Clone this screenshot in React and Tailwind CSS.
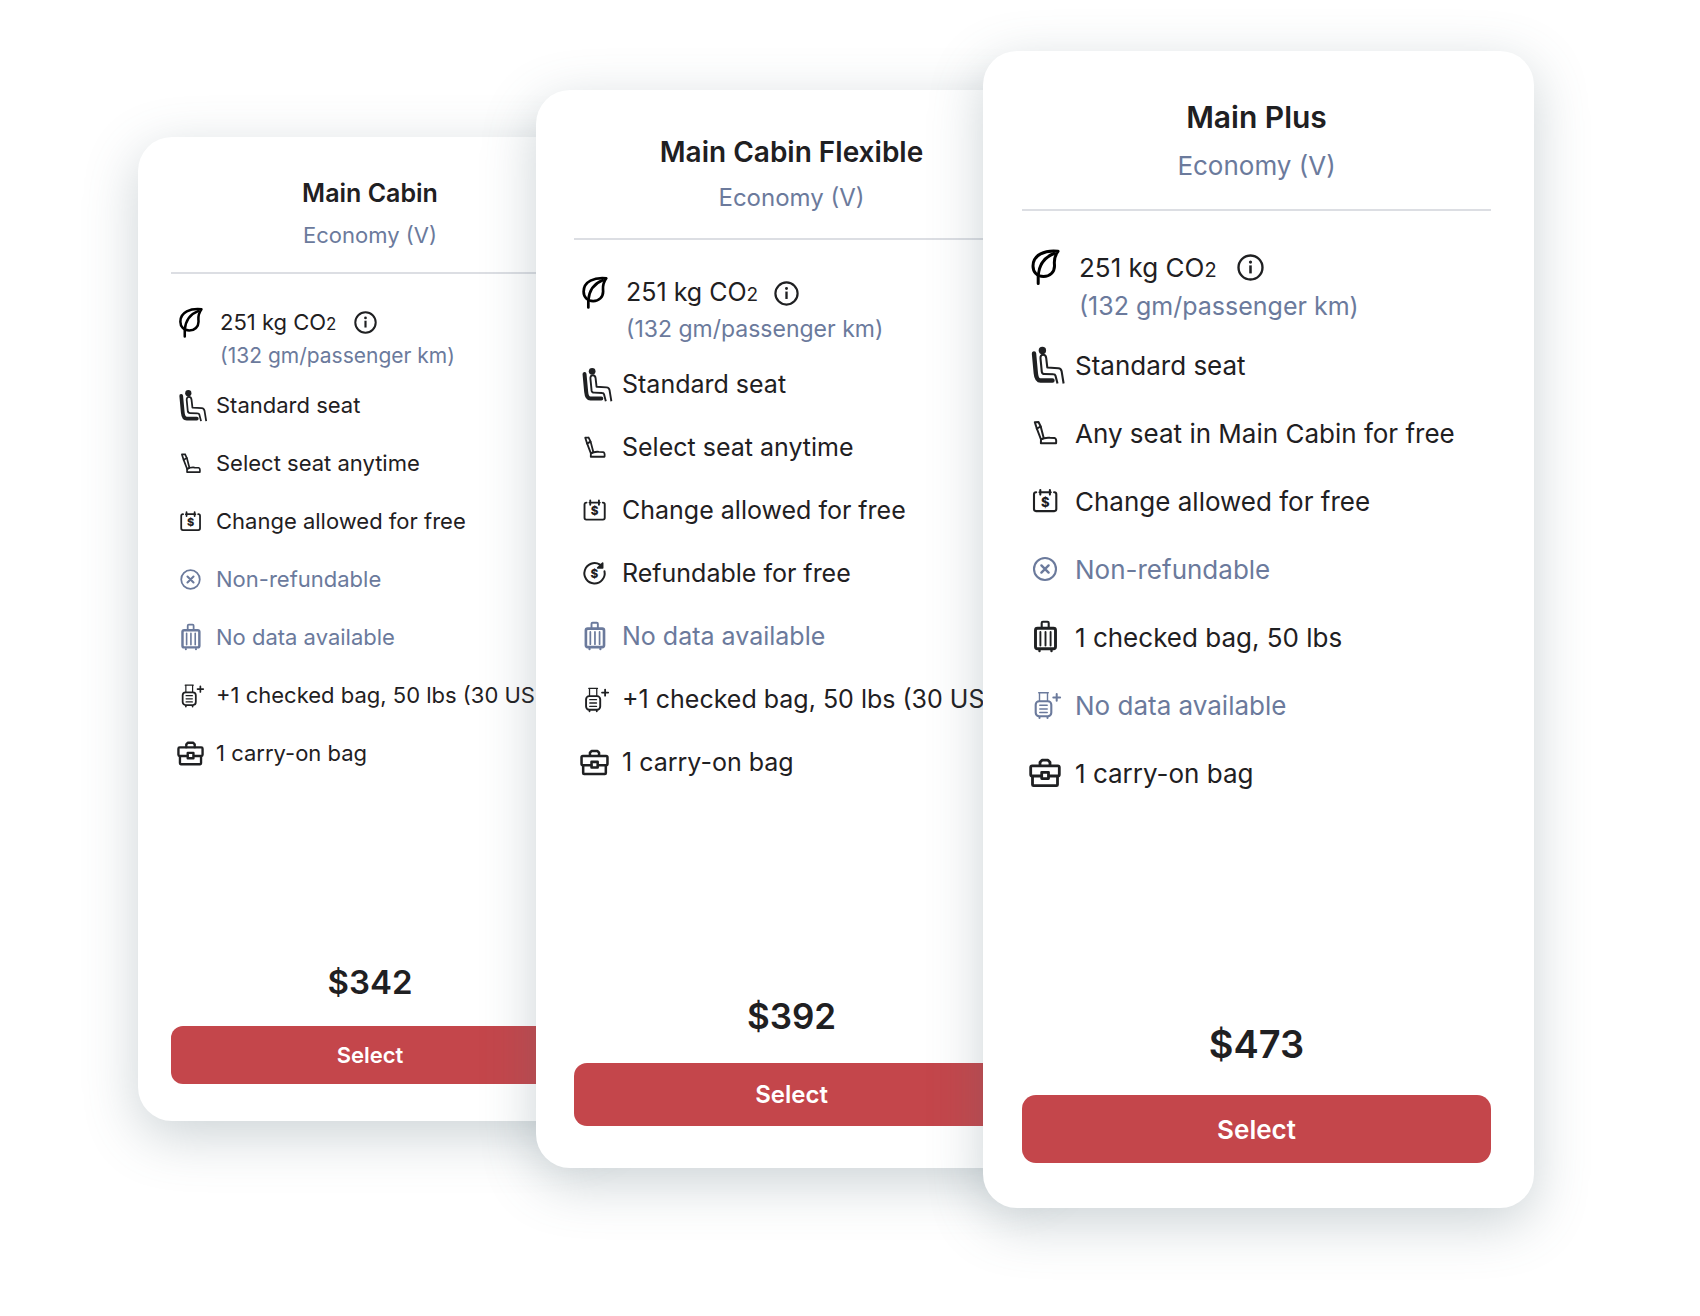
const fares = [
  {
    name: "Main Cabin",
    cabin: "Economy (V)",
    price: "$342",
    size: "sm",
    features: [
      { icon: PassengerIcon, text: "Standard seat" },
      { icon: SeatIcon, text: "Select seat anytime" },
      { icon: ChangeIcon, text: "Change allowed for free" },
      { icon: NoRefundIcon, text: "Non-refundable", muted: true },
      { icon: BagIcon, text: "No data available", muted: true },
      { icon: ExtraBagIcon, text: "+1 checked bag, 50 lbs (30 USD)" },
      { icon: CarryOnIcon, text: "1 carry-on bag" },
    ],
  },
  {
    name: "Main Cabin Flexible",
    cabin: "Economy (V)",
    price: "$392",
    size: "md",
    features: [
      { icon: PassengerIcon, text: "Standard seat" },
      { icon: SeatIcon, text: "Select seat anytime" },
      { icon: ChangeIcon, text: "Change allowed for free" },
      { icon: RefundIcon, text: "Refundable for free" },
      { icon: BagIcon, text: "No data available", muted: true },
      { icon: ExtraBagIcon, text: "+1 checked bag, 50 lbs (30 USD)" },
      { icon: CarryOnIcon, text: "1 carry-on bag" },
    ],
  },
  {
    name: "Main Plus",
    cabin: "Economy (V)",
    price: "$473",
    size: "lg",
    features: [
      { icon: PassengerIcon, text: "Standard seat" },
      { icon: SeatIcon, text: "Any seat in Main Cabin for free" },
      { icon: ChangeIcon, text: "Change allowed for free" },
      { icon: NoRefundIcon, text: "Non-refundable", muted: true },
      { icon: BagIcon, text: "1 checked bag, 50 lbs" },
      { icon: ExtraBagIcon, text: "No data available", muted: true },
      { icon: CarryOnIcon, text: "1 carry-on bag" },
    ],
  },
];

// each card is a bit bigger than the one behind it
const sizes = {
  sm: {
    card: "mt-[86px] -mr-[71px] pt-[37px] pb-[37px] pl-[33px] pr-[38px]",
    title: "text-[25px] leading-[38px]",
    cabin: "text-[22px] leading-[47px] pb-[13px]",
    list: "pt-[33px] pl-[6px] text-[22px]",
    co2: "gap-x-[16px] mb-[2px]",
    co2Line: "h-[30px] gap-[18px]",
    co2Sub: "text-[21px] leading-[37px]",
    small: "text-[17px]",
    info: "size-[23px]",
    row: "h-[58px] gap-[12px]",
    icon: "size-[27px]",
    price: "mt-[179px] mb-[23px] text-[33px] leading-[42px]",
    button: "h-[58px] text-[22px] rounded-[12px]",
  },
  md: {
    card: "mt-[39px] -mr-[65px] pt-[41px] pb-[42px] pl-[38px] pr-[39px]",
    title: "text-[28px] leading-[42px]",
    cabin: "text-[24px] leading-[50px] pb-[15px]",
    list: "pt-[36px] pl-[6px] text-[25px]",
    co2: "gap-x-[17px] mb-[4px]",
    co2Line: "h-[34px] gap-[16px]",
    co2Sub: "text-[23px] leading-[39px]",
    small: "text-[19px]",
    info: "size-[25px]",
    row: "h-[63px] gap-[13px]",
    icon: "size-[29px]",
    price: "mt-[200px] mb-[25px] text-[35px] leading-[44px]",
    button: "h-[63px] text-[24px] rounded-[13px]",
  },
  lg: {
    card: "pt-[44px] pb-[45px] pl-[39px] pr-[43px]",
    title: "text-[30px] leading-[44px]",
    cabin: "text-[26px] leading-[54px] pb-[16px]",
    list: "pt-[38px] pl-[7px] text-[26px]",
    co2: "gap-x-[18px] mb-[4px]",
    co2Line: "h-[36px] gap-[20px]",
    co2Sub: "text-[25px] leading-[42px]",
    small: "text-[20px]",
    info: "size-[27px]",
    row: "h-[68px] gap-[14px]",
    icon: "size-[32px]",
    price: "mt-[213px] mb-[27px] text-[38px] leading-[48px]",
    button: "h-[68px] text-[26px] rounded-[14px]",
  },
};

function Icon({ className, children }) {
  return (
    <svg
      aria-hidden="true"
      className={`shrink-0 overflow-visible ${className}`}
      viewBox="0 0 32 32"
      fill="none"
      stroke="currentColor"
      strokeLinecap="round"
      strokeLinejoin="round"
    >
      {children}
    </svg>
  );
}

function LeafIcon({ className }) {
  return (
    <Icon className={className}>
      <g strokeWidth="3">
        <path d="M29 .3C16-1 4 3.500 4 15c0 6 4 10.500 10.500 10.500 6.500 0 11-4.500 11-10.500 0-4-1.500-8 3.500-14.700z" />
        <path d="M9.200 32.500v-8C10 15.500 14.500 6.500 25 2.500" />
      </g>
    </Icon>
  );
}

function InfoIcon({ className }) {
  return (
    <Icon className={className}>
      <circle cx="16" cy="16" r="14.200" strokeWidth="2.800" />
      <path d="M16 13.500v9.500" strokeWidth="3" strokeLinecap="butt" />
      <circle cx="16" cy="9.600" r="1.900" fill="currentColor" stroke="none" />
    </Icon>
  );
}

function PassengerIcon({ className }) {
  return (
    <Icon className={className}>
      <circle cx="13.400" cy="1.400" r="3.700" fill="currentColor" stroke="none" />
      <path d="M5 4.500l1.800 19.500c.4 4.500 1.200 7.500 4.700 7.500h12" strokeWidth="4.400" />
      <g strokeWidth="2.100" strokeLinecap="butt">
        <path d="M28.500 34.500l-2-7.700c-.3-1-.8-1.500-2-1.500l-9-.3c-1.500 0-2.500-.7-2.700-2.200L11.500 9.500c-.5-5 5.200-4.700 5.700-.5l1.100 9.500 11 .7c2 .1 2.900 1 3.300 3l2 12.300" />
      </g>
    </Icon>
  );
}

function SeatIcon({ className }) {
  return (
    <Icon className={className}>
      <g strokeWidth="2">
        <path d="M5.800 5.200l3.700-.2 2.200 4.500 3 11.500-2.700 1.500L8 12z" />
        <path d="M7.800 11.700l3.800-2.200" />
        <path d="M12 22.500c2.500-1.500 6-2 9-1.700l4.500.2c2 .4 2 2 1.600 5.200H11.900z" />
      </g>
    </Icon>
  );
}

function ChangeIcon({ className }) {
  return (
    <Icon className={className}>
      <g strokeWidth="2.100">
        <path d="M7.200 7.300H7c-1.300 0-2 .7-2 2v14.800c0 1.300.7 2 2 2h18.300c1.300 0 2-.7 2-2V9.300c0-1.300-.7-2-2-2h-.2" />
        <path d="M10.500 7.300h11.300M11.300 5v4.600M20.900 5v4.600" />
      </g>
      <text x="16.200" y="21.500" fontSize="13" fontWeight="800" textAnchor="middle" fill="currentColor" stroke="none">$</text>
    </Icon>
  );
}

function RefundIcon({ className }) {
  return (
    <Icon className={className}>
      <path d="M22 6.300A11.200 11.200 0 1 0 27 13.500" strokeWidth="2.200" />
      <path d="M25 4.500v5.300h-5.500zM22 6.300l2.500 3" strokeWidth="1.800" fill="currentColor" />
      <text x="15.800" y="20.700" fontSize="13" fontWeight="800" textAnchor="middle" fill="currentColor" stroke="none">$</text>
    </Icon>
  );
}

function NoRefundIcon({ className }) {
  return (
    <Icon className={className}>
      <circle cx="16" cy="16" r="11" strokeWidth="2.100" />
      <path d="M12.400 12.400l7.200 7.200M19.600 12.400l-7.200 7.200" strokeWidth="2.400" />
    </Icon>
  );
}

function BagIcon({ className }) {
  return (
    <Icon className={className}>
      <path d="M12.700 6.500V2c0-.7.400-1.200 1.200-1.200h4.600c.8 0 1.200.5 1.200 1.200v4.500" strokeWidth="2.100" />
      <rect x="6.500" y="7.300" width="20" height="20.400" rx="2" strokeWidth="2.900" />
      <path d="M11.400 11v13.500M16.500 11v13.500M21.600 11v13.500" strokeWidth="1.900" />
      <path d="M10.500 29.500v.5M22.500 29.500v.5" strokeWidth="2.400" />
    </Icon>
  );
}

function ExtraBagIcon({ className }) {
  return (
    <Icon className={className}>
      <path d="M9.700 3.800h9.600M10.500 4v8M18.500 4v8" strokeWidth="1.400" />
      <rect x="6.700" y="12.300" width="15.600" height="15" rx="3.500" strokeWidth="2.100" />
      <path d="M10.800 16.200h7.400M10.800 19.900h7.400M10.800 23.600h7.400" strokeWidth="1.500" />
      <path d="M10.500 28.300v.8M18.500 28.300v.8" strokeWidth="2" />
      <path d="M27.700 5v6.800M24.300 8.400h6.800" strokeWidth="2" />
    </Icon>
  );
}

function CarryOnIcon({ className }) {
  return (
    <Icon className={className}>
      <g strokeWidth="2.800">
        <path d="M11 8.500V5.200l2-2h6l2 2v3.300" />
        <path d="M12.500 19H3.200c-1 0-1.500-.6-1.500-1.500V10.300c0-1 .6-1.500 1.500-1.500h25.600c1 0 1.500.6 1.500 1.500v7.200c0 1-.6 1.500-1.500 1.500H20" />
        <rect x="12.700" y="15.300" width="6.800" height="6.300" />
        <path d="M3.500 19.500v8.200c0 .7.300 1 1 1h23c.7 0 1-.3 1-1v-8.200" />
      </g>
    </Icon>
  );
}

function FareCard({ fare }) {
  const s = sizes[fare.size];

  return (
    <article
      className={`min-w-0 rounded-[34px] bg-white whitespace-nowrap shadow-[0_15px_54px_rgba(85,110,118,0.3)] ${s.card}`}
    >
      <header className="border-b-2 border-[#dcdee3] text-center">
        <h2 className={`font-semibold ${s.title}`}>{fare.name}</h2>
        <p className={`text-[#6b7a9c] ${s.cabin}`}>{fare.cabin}</p>
      </header>

      <div className={s.list}>
        <div className={`flex items-start ${s.co2}`}>
          <LeafIcon className={`mt-[2px] text-black ${s.icon}`} />
          <div>
            <div className={`flex items-center ${s.co2Line}`}>
              <p>
                251 kg CO<span className={`leading-none ${s.small}`}>2</span>
              </p>
              <button type="button" aria-label="About CO2 emissions">
                <InfoIcon className={s.info} />
              </button>
            </div>
            <p className={`text-[#6b7a9c] ${s.co2Sub}`}>(132 gm/passenger km)</p>
          </div>
        </div>

        <ul>
          {fare.features.map((feature) => (
            <li
              key={feature.text}
              className={`flex items-center ${s.row} ${feature.muted ? "text-[#6b7a9c]" : ""}`}
            >
              <feature.icon className={s.icon} />
              {feature.text}
            </li>
          ))}
        </ul>
      </div>

      <p className={`text-center font-semibold ${s.price}`}>{fare.price}</p>
      <button
        type="button"
        className={`block w-full bg-[#c4464b] font-semibold text-white ${s.button}`}
      >
        Select
      </button>
    </article>
  );
}

export default function App() {
  return (
    <main className="min-h-screen overflow-hidden bg-white pt-[51px] pr-[28px] pb-[108px] font-['Inter',sans-serif] text-[#1f2022]">
      <div className="mx-auto grid max-w-[1396px] grid-cols-[398fr_447fr_551fr] items-start">
        {fares.map((fare) => (
          <FareCard key={fare.name} fare={fare} />
        ))}
      </div>
    </main>
  );
}
